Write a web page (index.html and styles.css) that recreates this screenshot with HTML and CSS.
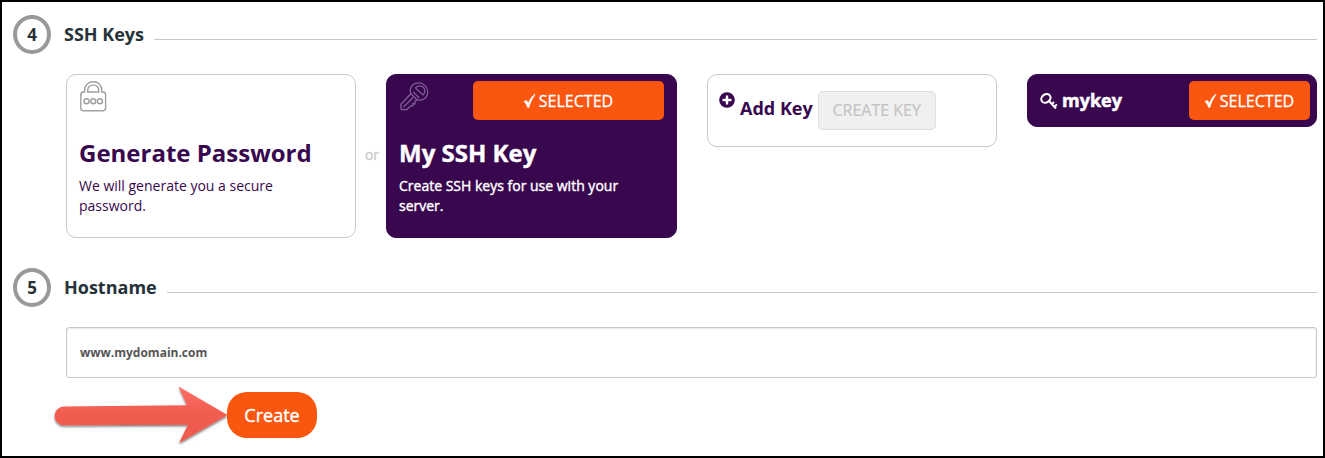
FILE: index.html
```html
<!DOCTYPE html>
<html lang="en">
<head>
<meta charset="utf-8">
<title>SSH Keys</title>
<link rel="stylesheet" href="styles.css">
</head>
<body>
<main class="frame">
  <section>
    <header class="step">
      <span class="step-number">4</span>
      <h2 class="step-title">SSH Keys</h2>
      <span class="rule"></span>
    </header>
    <div class="cards">
      <article class="card card-large">
        <div class="card-top">
          <svg class="icon-lock" width="27" height="31" viewBox="0 0 27 31" fill="none" stroke="#a0a0a0" stroke-width="1.4">
            <path d="M4.600 11V9.500C4.600 4 8.600.8 13.200.8s8.600 3.200 8.600 8.700V11h1.100q2.700 0 2.700 2.700v13.300q0 2.700-2.700 2.700H3.500Q.8 29.700.8 27V13.700Q.8 11 3.500 11z"/>
            <path d="M7.700 11V9.500C7.700 6 10 4.100 13.200 4.100S18.700 6 18.700 9.500V11z"/>
            <circle cx="6.500" cy="20.300" r="2.500"/><circle cx="13.200" cy="20.300" r="2.500"/><circle cx="19.900" cy="20.300" r="2.500"/>
          </svg>
        </div>
        <h3 class="card-title title-password">Generate Password</h3>
        <p class="card-text">We will generate you a secure<br>password.</p>
      </article>
      <span class="or">or</span>
      <article class="card card-large card-active">
        <div class="card-top">
          <svg class="icon-key" width="29" height="29" viewBox="0 0 30 30" fill="none" stroke="#80609a" stroke-width="1.300">
            <path d="M11.200 12.200C9 6.500 13 1 19 1c5.500 0 9.700 4.200 9.700 9.300 0 6-5.700 10-11.200 8l-2 2v2.200h-2.200v2.200h-2L7 28.500H1.800L1 27.600v-4.500z"/>
            <path d="M3.500 26 13.500 16M11.200 12.200l6.300 6.100M13.400 10l6.500 6.500"/>
            <path d="M16 6.200c2.200-3 6.200-2.800 8.200-.8s2.200 5.500-.4 8z"/>
          </svg>
          <button class="selected selected-wide"><svg class="check" width="11" height="14" viewBox="0 0 11 14"><path d="M0 7.500 2.600 6.600 4.300 9.400C6 5.500 8 2.200 10.500.2L11 .7C8.300 4.200 6.200 8.700 4.800 13.500H3.700C2.900 11.200 1.700 9 0 7.500z"/></svg><span>SELECTED</span></button>
        </div>
        <h3 class="card-title title-ssh">My SSH Key</h3>
        <p class="card-text text-ssh">Create SSH keys for use with your<br>server.</p>
      </article>
      <article class="card card-add">
        <svg class="icon-plus" width="16" height="16" viewBox="0 0 16 16"><circle cx="8" cy="8" r="7.800" fill="#38074e"/><path d="M8 3.500v9M3.500 8h9" stroke="#fff" stroke-width="2.400"/></svg>
        <h4 class="add-title">Add Key</h4>
        <button class="create-key" disabled>CREATE KEY</button>
      </article>
      <article class="card card-active card-mykey">
        <svg class="icon-smallkey" width="18" height="17" viewBox="0 0 18 17" fill="none" stroke="#fff" stroke-width="2">
          <ellipse cx="5.900" cy="5.400" rx="4.900" ry="4" transform="rotate(-35 5.900 5.400)"/>
          <path d="M8.700 7.700 16 15.500M11.700 11.500l2.200-2.500M14.200 14l2.700-2.600"/>
        </svg>
        <h4 class="mykey-title">mykey</h4>
        <button class="selected"><svg class="check" width="11" height="14" viewBox="0 0 11 14"><path d="M0 7.500 2.600 6.600 4.300 9.400C6 5.500 8 2.200 10.500.2L11 .7C8.300 4.200 6.200 8.700 4.800 13.500H3.700C2.900 11.200 1.700 9 0 7.500z"/></svg><span>SELECTED</span></button>
      </article>
    </div>
  </section>
  <section class="host">
    <header class="step">
      <span class="step-number">5</span>
      <h2 class="step-title title-host">Hostname</h2>
      <span class="rule"></span>
    </header>
    <input class="hostname" type="text" value="www.mydomain.com">
    <div class="actions">
      <svg class="arrow" width="179" height="66" viewBox="0 0 179 66">
        <defs>
          <linearGradient id="red" x1="0" y1="0" x2="0" y2="1"><stop offset="0" stop-color="#ff7065"/><stop offset=".45" stop-color="#f15d50"/><stop offset="1" stop-color="#ed5b4e"/></linearGradient>
          <filter id="shadow" x="-5%" y="-10%" width="110%" height="130%"><feDropShadow dx="0" dy="1.500" stdDeviation="1.200" flood-color="#000" flood-opacity=".55"/></filter>
        </defs>
        <path d="M14 21.500 137 20.300 128.500 1.500 177.500 30 129 58 138 39.800 14 40.300A9.400 9.400 0 0 1 14 21.500z" fill="url(#red)" filter="url(#shadow)"/>
      </svg>
      <button class="create">Create</button>
    </div>
  </section>
</main>
</body>
</html>
```
FILE: styles.css
```css
* { box-sizing: border-box; }
body { margin: 0; background: #fff; font-family: "Open Sans", "Noto Sans", sans-serif; }
h2, h3, h4, p { margin: 0; }
button { margin: 0; font-family: inherit; }
svg { display: block; flex: none; }
.frame { height: 458px; border: 2px solid #000; padding: 13px 6px 0 11px; }
.step { display: flex; height: 39px; align-items: center; }
.step-number { width: 38px; height: 39px; border: 4px solid #999; border-radius: 50%; text-align: center; font-size: 17px; line-height: 31px; font-weight: 700; color: #263238; }
.step-title { margin: 0 0 2px 13px; font-size: 18px; line-height: 24px; font-weight: 700; color: #263238; white-space: nowrap; }
.rule { flex: 1; height: 1px; margin: 9px 0 0 10px; background: #c8c8c8; }
.cards { display: flex; align-items: flex-start; margin: 20px 0 0 53px; }
.card { border: 1px solid #c8c8c8; border-radius: 10px; color: #38074e; background: #fff; }
.card-large { width: 290px; height: 164px; padding: 6px 12px; }
.card-active { color: #fff; background: #38074e; border-color: #38074e; }
.card-large.card-active { width: 291px; }
.card-top { display: flex; height: 56px; justify-content: space-between; align-items: flex-start; }
.icon-lock { margin-left: 1px; }
.icon-key { margin: 1px 0 0 1px; }
.card-title { font-size: 24px; line-height: 32px; font-weight: 700; white-space: nowrap; }
.title-ssh { -webkit-text-stroke: .4px #fff; }
.card-text { margin-top: 7px; font-size: 14px; line-height: 20px; white-space: nowrap; }
.text-ssh { -webkit-text-stroke: .4px #fff; }
.or { width: 30px; padding: 71px 0 0 2px; color: #ccc; font-size: 14px; line-height: 20px; text-align: center; -webkit-text-stroke: .3px #ccc; }
.selected { display: flex; width: 121px; height: 39px; padding: 0; align-items: center; justify-content: center; gap: 4px; border: 0; border-radius: 5px; color: #fff; background: #fa560f; font-size: 16px; line-height: 22px; -webkit-text-stroke: .3px #fff; }
.selected-wide { width: 191px; }
.check { fill: #fff; stroke: #fff; stroke-width: .7; overflow: visible; }
.card-add { display: flex; width: 290px; height: 73px; margin-left: 30px; padding: 16px 11px; align-items: flex-start; }
.icon-plus { margin-top: 1px; }
.add-title { margin: 5px 0 0 5px; font-size: 18px; line-height: 24px; white-space: nowrap; }
.create-key { width: 118px; height: 39px; margin-left: 5px; padding: 0 0 2px; border: 1px solid #ddd; border-radius: 5px; background: #f0f0f0; color: #c4c4c4; font-size: 16px; -webkit-text-stroke: .2px #c4c4c4; }
.card-mykey { display: flex; width: 290px; height: 53px; margin-left: 30px; padding: 0 6px 0 12px; align-items: center; }
.icon-smallkey { margin-top: 2px; }
.mykey-title { margin: 0 auto 2px 4px; font-size: 18px; line-height: 24px; -webkit-text-stroke: .5px #fff; }
.host { margin-top: 30px; }
.hostname { display: block; width: 1251px; height: 51px; margin: 20px 0 0 53px; padding: 0 13px; border: 1px solid #c8c8c8; border-radius: 3px; outline: 0; box-shadow: inset 0 1px 2px #e8e8e8; color: #555; font: 700 12px "Open Sans", "Noto Sans", sans-serif; }
.actions { display: flex; align-items: flex-start; padding: 7px 0 0 37px; }
.create { width: 90px; height: 46px; margin: 7px 0 0 -2px; padding: 0; border: 0; border-radius: 20px; background: #fa560f; color: #fff; font-size: 18px; -webkit-text-stroke: .4px #fff; }
.arrow { position: relative; z-index: 1; }
```
